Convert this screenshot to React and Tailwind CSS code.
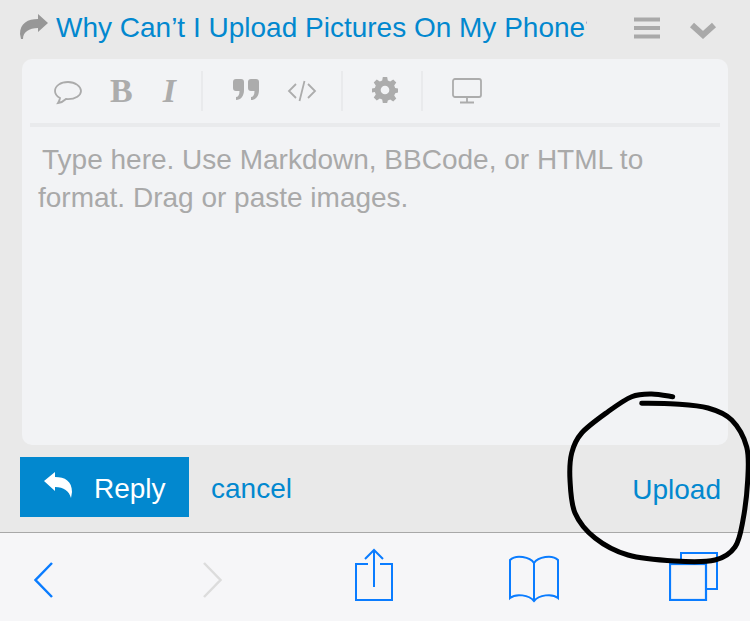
const ink = [[672.7,396.7],[651.7,394],[631.7,396.7],[608,411.7],[581.7,433],[571.7,453],[570,480],[575,513],[595,538],[628,555],[675,561],[715,560],[735,547],[743,520],[747.7,480],[746.7,447],[731.7,420],[708,408],[675,404],[641.7,403.3]];
function smooth(p) {
  let d = `M${p[0][0]} ${p[0][1]}`;
  for (let i = 0; i < p.length - 1; i++) {
    const a = p[Math.max(i - 1, 0)], b = p[i], c = p[i + 1], e = p[Math.min(i + 2, p.length - 1)];
    d += ` C${b[0] + (c[0] - a[0]) / 6} ${b[1] + (c[1] - a[1]) / 6} ${c[0] - (e[0] - b[0]) / 6} ${c[1] - (e[1] - b[1]) / 6} ${c[0]} ${c[1]}`;
  }
  return d;
}

function Sep() { return <div className="w-[2px] h-10 bg-[#e9eaec]" />; }

export default function App() {
  return (
    <div className="relative w-[750px] h-[621px] overflow-hidden flex flex-col bg-[#e9e9e9] font-['Liberation_Sans',Arial,sans-serif]">
      <div className="h-[59px] shrink-0 flex items-center pl-5">
        <svg width="28" height="26" viewBox="0 0 28 26" className="shrink-0 mb-[5px]"><path d="M28 9 18 0v5C8 5 0 9 0 20l1 5h2C3 18 9 14 18 14v4z" fill="#979797"/></svg>
        <div className="ml-2 mb-1 w-[531px] overflow-hidden whitespace-nowrap text-[28px] leading-[56px] text-[#0288cf]">Why Can’t I Upload Pictures On My Phone?</div>
        <svg width="26" height="24" viewBox="0 0 26 24" className="ml-[47px] mb-[3px] shrink-0"><path d="M0 3.500h26M0 12h26M0 20.500h26" stroke="#a9a9a9" strokeWidth="4.200" /></svg>
        <svg width="28" height="20" viewBox="0 0 28 20" className="ml-[29px] shrink-0 mt-[3px]"><path d="M3 4l11 10L25 4" fill="none" stroke="#a9a9a9" strokeWidth="6" /></svg>
      </div>
      <div className="mx-[22px] w-[706px] h-[386px] shrink-0 rounded-[10px] bg-[#f2f3f5] flex flex-col">
        <div className="h-[68px] mx-2 border-b-4 border-[#e9eaec] flex items-center shrink-0">
          <svg width="30" height="28" viewBox="0 0 30 28" className="ml-[23px] mt-[3px] shrink-0"><path d="M15 3C7.500 3 2 7 2 12c0 3 2 5.500 5 7-.300 2-1 3.500-2 5 3-.500 6-2 8-4 .700.100 1.300.100 2 .100 7.500 0 13-3.800 13-8.100S22.500 3 15 3z" fill="none" stroke="#ababab" strokeWidth="1.800" /></svg>
          <span className="ml-[27px] font-bold text-[34px] leading-none text-[#acacac] font-['Liberation_Serif',serif]">B</span>
          <span className="ml-[30px] font-bold italic text-[34px] leading-none text-[#acacac] font-['Liberation_Serif',serif]">I</span>
          <div className="ml-[25px]"><Sep /></div>
          <svg width="28" height="24" viewBox="0 0 28 24" className="ml-[29px] shrink-0 mb-[3px]"><path d="M4 1h5a3 3 0 0 1 3 3v8c0 6-3 10-8 10v-3c2 0 3.500-2 3.500-6H4a3 3 0 0 1-3-3V4a3 3 0 0 1 3-3zM19 1h5a3 3 0 0 1 3 3v8c0 6-3 10-8 10v-3c2 0 3.500-2 3.500-6H19a3 3 0 0 1-3-3V4a3 3 0 0 1 3-3z" fill="#acacac" /></svg>
          <svg width="30" height="22" viewBox="0 0 30 22" className="ml-[27px] shrink-0"><path d="M9 4 2 11l7 7M21 4l7 7-7 7M17.500 1l-5 20" fill="none" stroke="#acacac" strokeWidth="1.800" /></svg>
          <div className="ml-[24px]"><Sep /></div>
          <svg width="26" height="26" viewBox="0 0 24 24" className="ml-[29px] shrink-0 mb-[3px]"><path fillRule="evenodd" d="M10 0h4l.600 3.300 2.200.900L19.600 2.300l2.800 2.800-1.900 2.800.900 2.200L24 10.700v3.600l-2.600.6-.9 2.200 1.900 2.800-2.800 2.800-2.800-1.900-2.200.9L14 24h-4l-.600-3.300-2.200-.9-2.800 1.900-2.800-2.800 1.900-2.800-.9-2.200L0 14.300v-3.600l2.600-.6.900-2.200-1.900-2.800 2.800-2.800 2.800 1.900 2.200-.9zM12 8a4 4 0 1 0 0 8 4 4 0 0 0 0-8z" fill="#acacac" /></svg>
          <div className="ml-[23px]"><Sep /></div>
          <svg width="30" height="26" viewBox="0 0 30 26" className="ml-[29px] shrink-0"><rect x="1" y="1" width="28" height="18" rx="2" fill="none" stroke="#acacac" strokeWidth="1.800" /><path d="M15 19v5M8 24.500h14" stroke="#acacac" strokeWidth="1.800" fill="none" /></svg>
        </div>
        <div className="px-4 pt-[14px] text-[28px] leading-[38px] text-[#a9a9a9]">
          <div className="pl-[4px] whitespace-nowrap">Type here. Use Markdown, BBCode, or HTML to</div>
          <div className="whitespace-nowrap">format. Drag or paste images.</div>
        </div>
      </div>
      <div className="flex-1 flex items-start pt-3 px-5 relative">
        <div className="w-[169px] h-[60px] bg-[#0288cf] flex items-center pl-6 text-white text-[28px]">
          <svg width="28" height="26" viewBox="0 0 28 26" className="shrink-0 mb-[4px]"><path d="M0 9 11 0v5C21 5 28 9 28 20l-1 6c-2-7-7-11-16-11v4z" fill="#fff" /></svg>
          <span className="ml-[22px] mt-1">Reply</span>
        </div>
        <span className="ml-[22px] mt-[2px] text-[28px] leading-[60px] text-[#0288cf]">cancel</span>
        <span className="ml-auto mr-[9px] mt-[3px] text-[28px] leading-[60px] text-[#0288cf]">Upload</span>
      </div>
      <div className="h-[89px] shrink-0 border-t border-[#a8a8a8] bg-[#f6f6f8] flex items-start">
        <div className="pt-[29px] pl-[34px]"><svg width="19" height="36" viewBox="0 0 19 36" className="block"><path d="M18 1 1.500 18 18 35" fill="none" stroke="#0a7cff" strokeWidth="2.500" /></svg></div>
        <div className="pt-[29px] ml-[150px]"><svg width="19" height="36" viewBox="0 0 19 36" className="block"><path d="M1 1l16.500 17L1 35" fill="none" stroke="#dcdcdc" strokeWidth="2.500" /></svg></div>
        <div className="pt-[15px] ml-[133px]"><svg width="38" height="53" viewBox="0 0 38 53" className="block"><path d="M13 16H1v36h36V16H25M19 39V2M10 11l9-9 9 9" fill="none" stroke="#0a7cff" strokeWidth="2" /></svg></div>
        <div className="pt-[21px] ml-[115px]"><svg width="52" height="49" viewBox="0 0 52 49" className="block"><path d="M26 9C22 3 8 0 2 6v38c6-5 19-3 24 3 5-6 18-8 24-3V6C44 0 30 3 26 9zM26 9v38" fill="none" stroke="#0a7cff" strokeWidth="2" /></svg></div>
        <div className="pt-[19px] ml-[109px]"><svg width="50" height="49" viewBox="0 0 50 49" className="block"><path d="M12 11V1h36v36H37" fill="none" stroke="#0a7cff" strokeWidth="2" /><rect x="1" y="12" width="36" height="36" fill="none" stroke="#0a7cff" strokeWidth="2.200" /></svg></div>
      </div>
      <svg className="absolute left-0 top-0 pointer-events-none" width="750" height="621" viewBox="0 0 750 621"><path d={smooth(ink)} fill="none" stroke="#000" strokeWidth="5" strokeLinecap="round" strokeLinejoin="round" /></svg>
    </div>
  );
}
